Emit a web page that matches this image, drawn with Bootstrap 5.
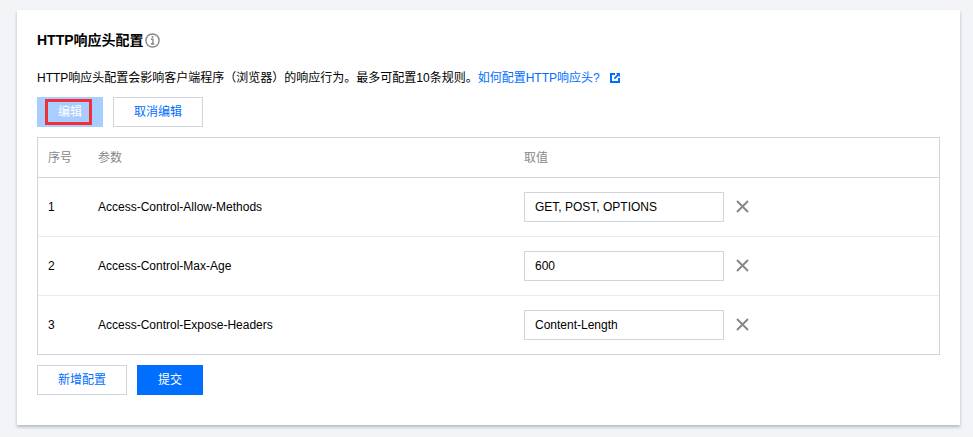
<!DOCTYPE html>
<html lang="zh-CN">
<head>
<meta charset="utf-8">
<title>HTTP响应头配置</title>
<link href="https://cdn.jsdelivr.net/npm/bootstrap@5.3.0/dist/css/bootstrap.min.css" rel="stylesheet">
<style>
html, body { height: 100%; }
body { background: #f2f4f8; font-family: "Liberation Sans", Arial, "Noto Sans CJK SC", sans-serif; font-size: 12px; line-height: 18px; color: #000; padding: 10px 13px 12px 17px; overflow: hidden; }
.panel-box { background: #fff; height: 415px; padding: 20px; box-shadow: 0 2px 3px rgba(54,58,80,.32); border-radius: 0; }
.panel-title { font-size: 14px; font-weight: 700; line-height: 20px; margin: 0; color: #000; }
.info-ic { margin-left: 1px; }
.panel-desc { margin: 18px 0 0; line-height: 20px; color: #000; }
.panel-desc a { color: #006eff; text-decoration: none; }
.ext-icon { margin-left: 10px; vertical-align: -1px; }
.tool-row { margin-top: 9px; gap: 10px; }
.act-btn { width: 90px; height: 30px; padding: 0; border-radius: 0; font-size: 12px; line-height: 28px; border: 1px solid #cfd5de; background: #fff; color: #006eff; }
.act-btn.narrow { width: 66px; border-color: #006eff; background: #006eff; color: #fff; }
.act-btn.off { width: 66px; border-color: #a8cdff; background: #a8cdff; color: #fff; opacity: 1; position: relative; }
.act-btn.off::after { content: ""; position: absolute; left: 7px; top: 1px; width: 47px; height: 26px; border: 3px solid #ef3038; }
.cfg-wrap { margin-top: 10px; border: 1px solid #cfd5de; height: 218px; }
.cfg-table { margin: 0; width: 100%; table-layout: fixed; --bs-table-bg: transparent; }
.cfg-table th, .cfg-table td { padding: 0 10px; font-size: 12px; vertical-align: middle; border-bottom: 1px solid #e7eaef; color: #000; box-shadow: none; }
.cfg-table th { height: 39px; padding-top: 2px; font-weight: 400; color: #888; border-bottom-color: #cfd5de; }
.cfg-table td { height: 59px; }
.cfg-table tr:last-child td { border-bottom: 0; }
.cfg-table .col-no { width: 50px; }
.cfg-table .col-val { width: 425px; }
.val-input { width: 200px; height: 30px; border: 1px solid #cfd5de; border-radius: 0; padding: 0 10px; font-size: 12px; line-height: 28px; color: #000; font-family: inherit; }
.val-input:focus { box-shadow: none; border-color: #cfd5de; }
.del-x { background: none; border: 0; padding: 0; width: 13px; height: 13px; margin-left: 12px; line-height: 0; }
.foot-row { margin-top: 10px; gap: 10px; }
</style>
</head>
<body>
<div class="panel-box">
  <h1 class="panel-title d-flex align-items-center">HTTP响应头配置
    <svg class="info-ic" width="15" height="15" viewBox="0 0 16 16" fill="none"><circle cx="8" cy="8" r="7" stroke="#888" stroke-width="1.5"/><rect x="7.1" y="3.3" width="1.8" height="1.8" fill="#888"/><path d="M6.3 6.7H8.4V11.6M6.2 11.8H10" stroke="#888" stroke-width="1.5"/></svg>
  </h1>
  <p class="panel-desc">HTTP响应头配置会影响客户端程序（浏览器）的响应行为。最多可配置10条规则。<a href="#">如何配置HTTP响应头?</a><svg class="ext-icon" width="10" height="10" viewBox="0 0 10 10"><path d="M0 0H5V2H2V8H8V5H10V10H0Z" fill="#006eff"/><path d="M6 0H10V4L8.6 2.8L5 6.3L3.7 5L7.2 1.4Z" fill="#006eff"/></svg></p>
  <div class="d-flex tool-row">
    <button type="button" class="btn act-btn off" disabled>编辑</button>
    <button type="button" class="btn act-btn">取消编辑</button>
  </div>
  <div class="cfg-wrap">
    <table class="table cfg-table">
      <thead>
        <tr><th class="col-no">序号</th><th>参数</th><th class="col-val">取值</th></tr>
      </thead>
      <tbody>
        <tr>
          <td>1</td><td>Access-Control-Allow-Methods</td>
          <td><div class="d-flex align-items-center"><input class="form-control val-input" value="GET, POST, OPTIONS"><button type="button" class="del-x" aria-label="删除"><svg width="13" height="13" viewBox="0 0 13 13"><path d="M1 1L12 12M12 1L1 12" stroke="#888" stroke-width="2"/></svg></button></div></td>
        </tr>
        <tr>
          <td>2</td><td>Access-Control-Max-Age</td>
          <td><div class="d-flex align-items-center"><input class="form-control val-input" value="600"><button type="button" class="del-x" aria-label="删除"><svg width="13" height="13" viewBox="0 0 13 13"><path d="M1 1L12 12M12 1L1 12" stroke="#888" stroke-width="2"/></svg></button></div></td>
        </tr>
        <tr>
          <td>3</td><td>Access-Control-Expose-Headers</td>
          <td><div class="d-flex align-items-center"><input class="form-control val-input" value="Content-Length"><button type="button" class="del-x" aria-label="删除"><svg width="13" height="13" viewBox="0 0 13 13"><path d="M1 1L12 12M12 1L1 12" stroke="#888" stroke-width="2"/></svg></button></div></td>
        </tr>
      </tbody>
    </table>
  </div>
  <div class="d-flex foot-row">
    <button type="button" class="btn act-btn">新增配置</button>
    <button type="button" class="btn act-btn narrow">提交</button>
  </div>
</div>
<script src="https://cdn.jsdelivr.net/npm/bootstrap@5.3.0/dist/js/bootstrap.bundle.min.js"></script>
</body>
</html>
